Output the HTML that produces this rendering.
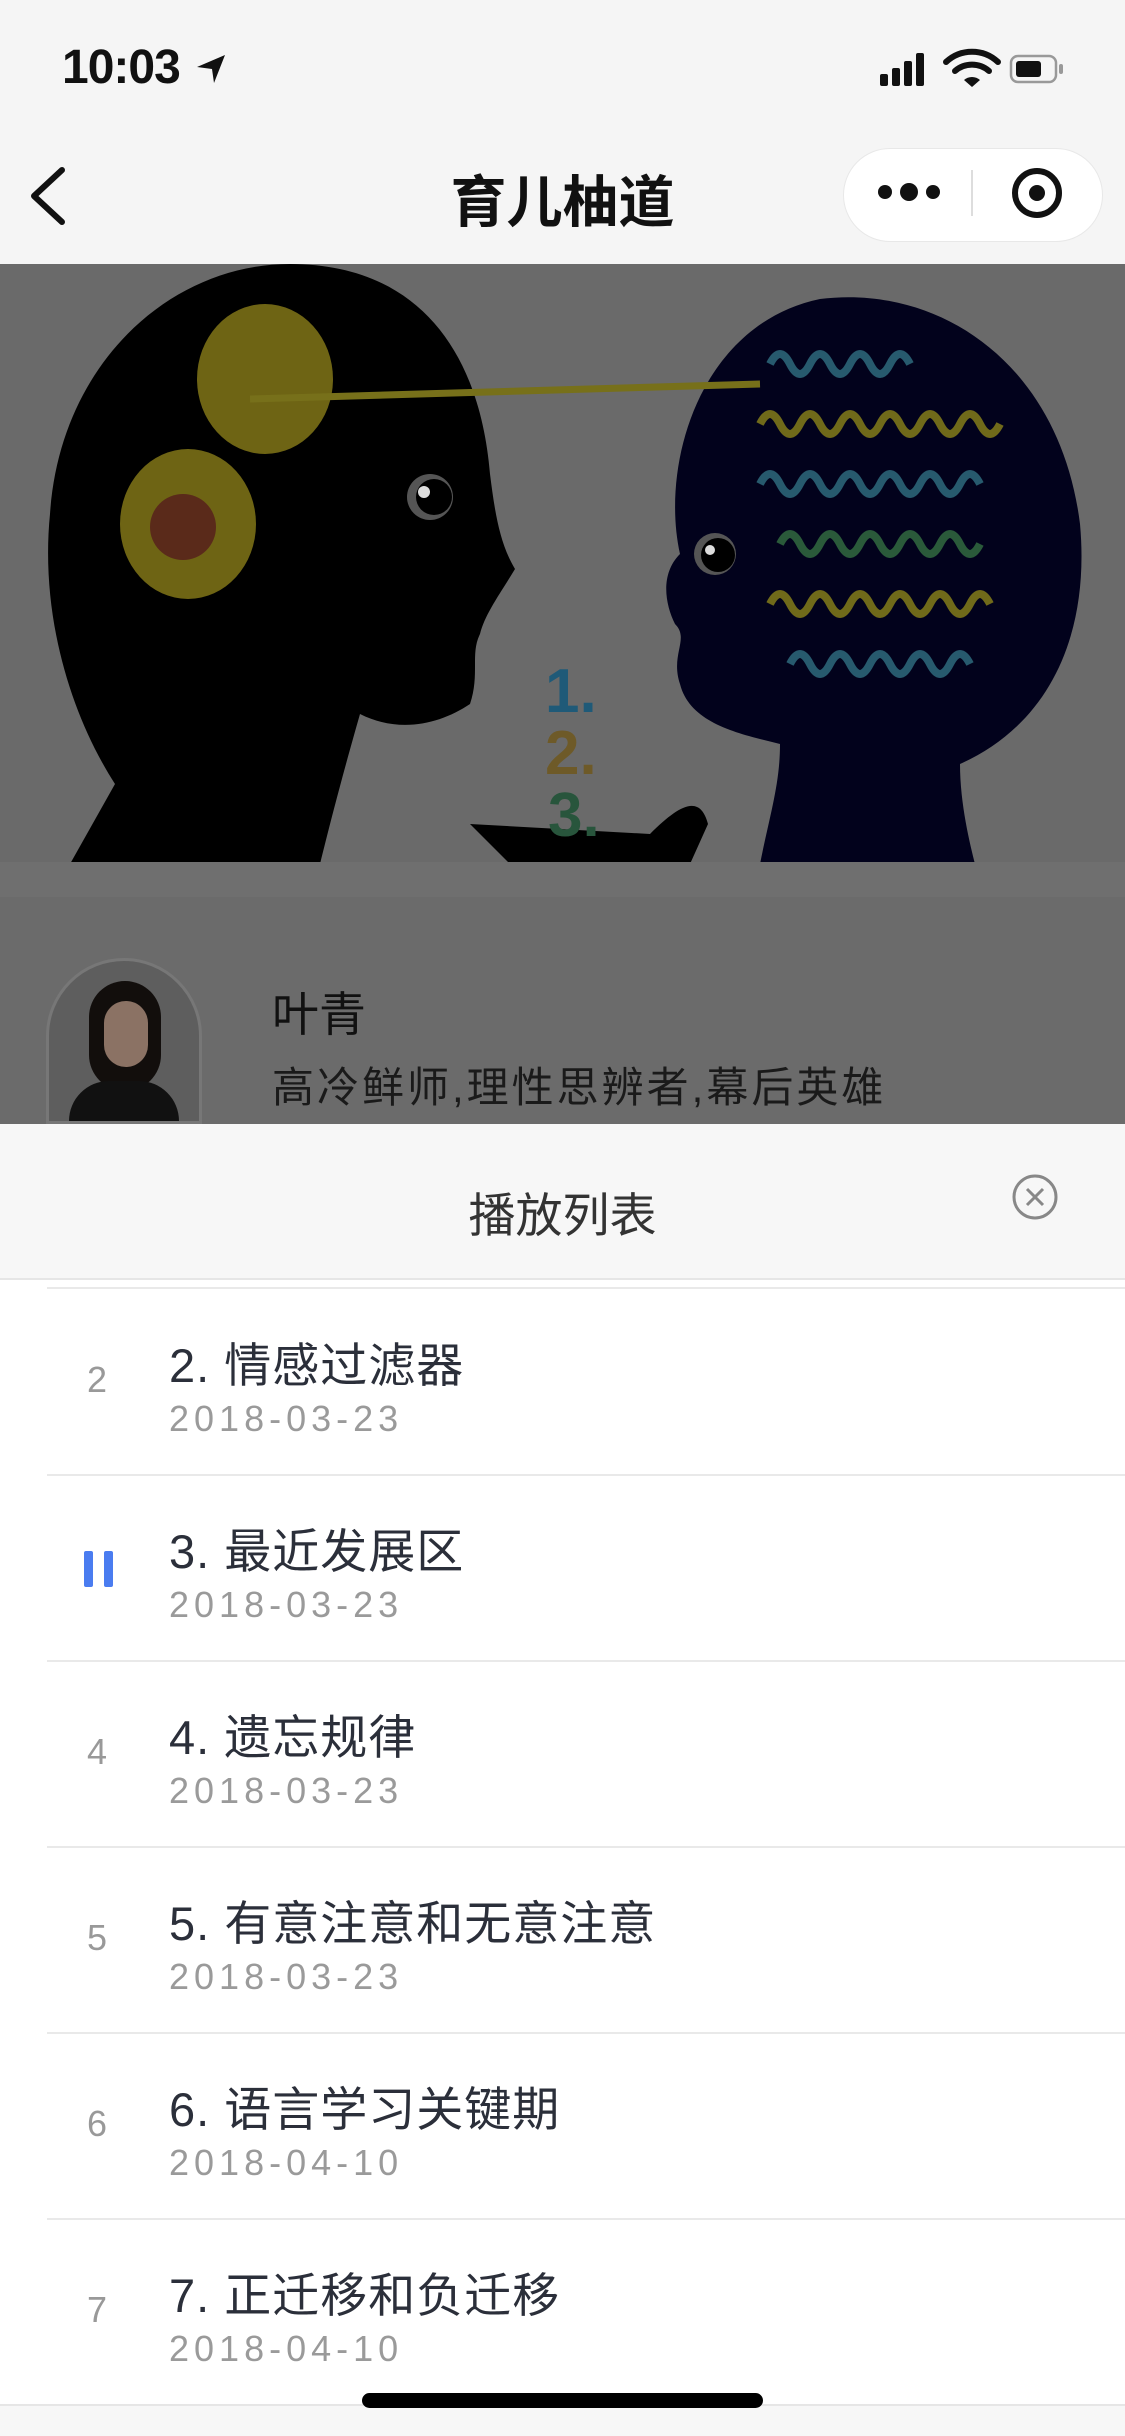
<!DOCTYPE html>
<html><head><meta charset="utf-8">
<style>
*{margin:0;padding:0;box-sizing:border-box}
body{width:1125px;height:2436px;overflow:hidden;background:#fff;font-family:"Liberation Sans","Noto Sans CJK SC",sans-serif;position:relative}
.abs{position:absolute}
.num{position:absolute;left:80px;width:34px;text-align:center;font-size:36px;color:#999}
.t{position:absolute;left:169px;font-size:47px;color:#2b2f3a;letter-spacing:1px;white-space:nowrap}
.d{position:absolute;left:169px;font-size:36px;color:#9a9a9a;letter-spacing:5px}
.sep{position:absolute;left:47px;right:0;height:2px;background:#e9e9e9}
</style></head><body>
<div class="abs" style="left:0;top:0;width:1125px;height:264px;background:#f5f5f5"></div>
<div class="abs" style="left:62px;top:40px;font-size:48px;color:#111;letter-spacing:-1px;font-weight:bold">10:03</div>
<svg class="abs" style="left:194px;top:52px" width="34" height="34" viewBox="0 0 34 34"><path d="M31 3 L3 15 L18 17 L20 31 Z" fill="#111"/></svg>
<svg class="abs" style="left:878px;top:48px" width="200" height="40" viewBox="0 0 200 40">
<rect x="2" y="26" width="8" height="12" rx="2" fill="#111"/><rect x="14" y="20" width="8" height="18" rx="2" fill="#111"/><rect x="26" y="13" width="8" height="25" rx="2" fill="#111"/><rect x="38" y="5" width="8" height="33" rx="2" fill="#111"/>
<path d="M68 14 A38 38 0 0 1 120 14" fill="none" stroke="#111" stroke-width="6" stroke-linecap="round"/>
<path d="M77 23 A26 26 0 0 1 111 23" fill="none" stroke="#111" stroke-width="6" stroke-linecap="round"/>
<path d="M86 32 L94 39 L102 32 A12 12 0 0 0 86 32 Z" fill="#111"/>
<rect x="133" y="8" width="45" height="26" rx="7" fill="none" stroke="#999" stroke-width="2.5"/><rect x="138" y="13" width="25" height="16" rx="3" fill="#111"/><rect x="181" y="16" width="4" height="10" rx="2" fill="#999"/>
</svg>
<svg class="abs" style="left:26px;top:164px" width="44" height="64" viewBox="0 0 44 64"><path d="M36 6 L8 32 L36 58" fill="none" stroke="#111" stroke-width="6" stroke-linecap="round" stroke-linejoin="round"/></svg>
<div class="abs" style="left:0;width:1125px;top:158px;text-align:center;font-size:56px;font-weight:bold;color:#111">育儿柚道</div>
<div class="abs" style="left:843px;top:148px;width:260px;height:94px;border-radius:47px;background:#fff;border:1px solid #e8e8e8"></div>
<svg class="abs" style="left:843px;top:148px" width="262" height="96" viewBox="0 0 262 96"><circle cx="42" cy="44" r="7" fill="#111"/><circle cx="66" cy="44" r="9" fill="#111"/><circle cx="90" cy="44" r="7" fill="#111"/><rect x="128" y="22" width="2" height="46" fill="#ddd"/><circle cx="194" cy="45" r="22" fill="none" stroke="#111" stroke-width="6"/><circle cx="194" cy="45" r="8" fill="#111"/></svg>
<div class="abs" style="left:0;top:264px;width:1125px;height:600px;background:#6a6a6a;overflow:hidden">
<svg width="1125" height="600" viewBox="0 0 1125 600">
<path d="M70 600 L115 520 C70 450 40 350 50 250 C60 100 170 0 290 0 C420 0 480 90 490 210 C495 250 500 280 515 305 C500 330 485 350 480 370 C470 390 480 410 470 440 C440 460 400 470 360 450 C340 520 330 560 320 600 Z" fill="#000"/>
<path d="M470 560 L510 600 L690 600 L708 560 C700 530 680 540 650 570 Z" fill="#000"/>
<path d="M760 600 C770 550 780 520 780 480 C740 470 690 460 680 420 C670 390 690 375 675 360 C665 340 660 310 680 290 C660 200 700 60 820 35 C940 20 1060 100 1080 260 C1090 370 1050 460 960 500 C960 540 970 580 975 600 Z" fill="#02021c"/>
<circle cx="430" cy="233" r="23" fill="#555"/><circle cx="434" cy="233" r="18" fill="#000"/><circle cx="424" cy="228" r="6" fill="#ddd"/>
<circle cx="715" cy="290" r="21" fill="#555"/><circle cx="718" cy="291" r="17" fill="#000"/><circle cx="710" cy="286" r="5" fill="#ddd"/>
<ellipse cx="265" cy="115" rx="68" ry="75" fill="#6e6414"/><ellipse cx="188" cy="260" rx="68" ry="75" fill="#6e6414"/><circle cx="183" cy="263" r="33" fill="#5a2a1a"/>
<path d="M250 135 L760 120" stroke="#77701a" stroke-width="7"/>
<g fill="none" stroke-width="8"><path d="M760 160 q10 -20 20 0 t20 0 t20 0 t20 0 t20 0 t20 0 t20 0 t20 0 t20 0 t20 0 t20 0 t20 0" stroke="#706a1a"/><path d="M760 220 q10 -20 20 0 t20 0 t20 0 t20 0 t20 0 t20 0 t20 0 t20 0 t20 0 t20 0 t20 0" stroke="#275a6e"/><path d="M780 280 q10 -20 20 0 t20 0 t20 0 t20 0 t20 0 t20 0 t20 0 t20 0 t20 0 t20 0" stroke="#2a5a3a"/><path d="M770 340 q10 -20 20 0 t20 0 t20 0 t20 0 t20 0 t20 0 t20 0 t20 0 t20 0 t20 0 t20 0" stroke="#706a1a"/><path d="M790 400 q10 -20 20 0 t20 0 t20 0 t20 0 t20 0 t20 0 t20 0 t20 0 t20 0" stroke="#275a6e"/><path d="M770 100 q10 -20 20 0 t20 0 t20 0 t20 0 t20 0 t20 0 t20 0" stroke="#275a6e"/></g>
<text x="545" y="448" font-family="Liberation Sans" font-weight="bold" font-size="62" fill="#1f5a78">1.</text>
<text x="545" y="510" font-family="Liberation Sans" font-weight="bold" font-size="62" fill="#6e5a28">2.</text>
<text x="548" y="572" font-family="Liberation Sans" font-weight="bold" font-size="62" fill="#28553c">3.</text>
</svg></div>
<div class="abs" style="left:0;top:862px;width:1125px;height:36px;background:#6f6f6f"></div>
<div class="abs" style="left:0;top:897px;width:1125px;height:227px;background:#6b6b6b"></div>
<div class="abs" style="left:46px;top:958px;width:156px;height:166px;border-radius:78px 78px 0 0;border:3px solid #777;overflow:hidden;background:#5e5e5e">
<div class="abs" style="left:40px;top:20px;width:72px;height:110px;border-radius:36px;background:#120e0c"></div>
<div class="abs" style="left:55px;top:40px;width:44px;height:66px;border-radius:22px;background:#8b7264"></div>
<div class="abs" style="left:20px;top:120px;width:110px;height:60px;border-radius:40px 40px 0 0;background:#111"></div>
</div>
<div class="abs" style="left:272px;top:976px;font-size:47px;color:#111">叶青</div>
<div class="abs" style="left:272px;top:1054px;font-size:42px;color:#1a1a1a;letter-spacing:3px;white-space:nowrap">高冷鲜师,理性思辨者,幕后英雄</div>
<div class="abs" style="left:0;top:1124px;width:1125px;height:156px;background:#f7f7f7;border-bottom:2px solid #e6e6e6"></div>
<div class="abs" style="left:0;width:1125px;top:1177px;text-align:center;font-size:47px;color:#333">播放列表</div>
<svg class="abs" style="left:1010px;top:1172px" width="50" height="50" viewBox="0 0 50 50"><circle cx="25" cy="25" r="21" fill="none" stroke="#888" stroke-width="3"/><path d="M17 17 L33 33 M33 17 L17 33" stroke="#888" stroke-width="3"/></svg>
<div class="sep" style="top:1287px"></div>

<div class="num" style="top:1359px">2</div><div class="t" style="top:1327px">2. 情感过滤器</div><div class="d" style="top:1398px">2018-03-23</div>
<div class="sep" style="top:1474px"></div>
<div class="abs" style="left:84px;top:1551px;width:9px;height:36px;background:#4a7cf0;border-radius:2px"></div>
<div class="abs" style="left:104px;top:1551px;width:9px;height:36px;background:#4a7cf0;border-radius:2px"></div>
<div class="t" style="top:1513px">3. 最近发展区</div><div class="d" style="top:1584px">2018-03-23</div>
<div class="sep" style="top:1660px"></div>
<div class="num" style="top:1731px">4</div><div class="t" style="top:1699px">4. 遗忘规律</div><div class="d" style="top:1770px">2018-03-23</div>
<div class="sep" style="top:1846px"></div>
<div class="num" style="top:1917px">5</div><div class="t" style="top:1885px">5. 有意注意和无意注意</div><div class="d" style="top:1956px">2018-03-23</div>
<div class="sep" style="top:2032px"></div>
<div class="num" style="top:2103px">6</div><div class="t" style="top:2071px">6. 语言学习关键期</div><div class="d" style="top:2142px">2018-04-10</div>
<div class="sep" style="top:2218px"></div>
<div class="num" style="top:2289px">7</div><div class="t" style="top:2257px">7. 正迁移和负迁移</div><div class="d" style="top:2328px">2018-04-10</div>
<div class="abs" style="left:0;top:2404px;width:1125px;height:32px;background:#f7f7f7;border-top:2px solid #e6e6e6"></div>
<div class="abs" style="left:362px;top:2393px;width:401px;height:15px;border-radius:8px;background:#000"></div>
</body></html>
